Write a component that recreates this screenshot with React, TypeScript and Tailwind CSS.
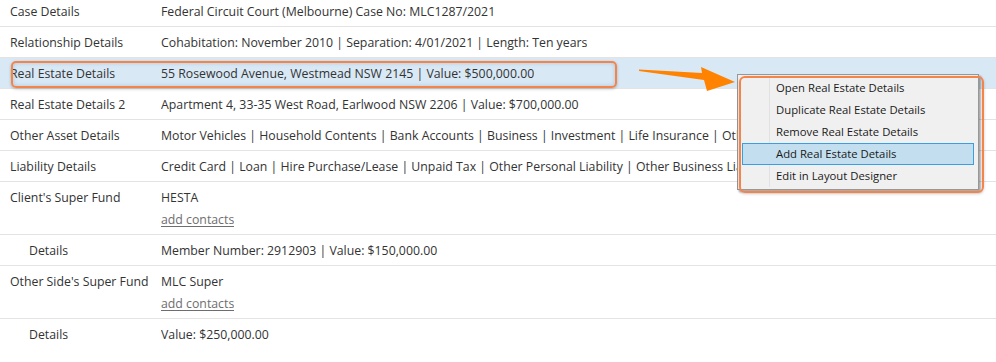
import React from "react";

type Row = {
  label: string;
  value: string;
  link?: boolean;
  indent?: boolean;
  selected?: boolean;
};

const rows: Row[] = [
  { label: "Case Details", value: "Federal Circuit Court (Melbourne) Case No: MLC1287/2021" },
  { label: "Relationship Details", value: "Cohabitation: November 2010 | Separation: 4/01/2021 | Length: Ten years" },
  { label: "Real Estate Details", value: "55 Rosewood Avenue, Westmead NSW 2145 | Value: $500,000.00", selected: true },
  { label: "Real Estate Details 2", value: "Apartment 4, 33-35 West Road, Earlwood NSW 2206 | Value: $700,000.00" },
  {
    label: "Other Asset Details",
    value: "Motor Vehicles | Household Contents | Bank Accounts | Business | Investment | Life Insurance | Other",
  },
  {
    label: "Liability Details",
    value:
      "Credit Card | Loan | Hire Purchase/Lease | Unpaid Tax | Other Personal Liability | Other Business Liability",
  },
  { label: "Client's Super Fund", value: "HESTA", link: true },
  { label: "Details", value: "Member Number: 2912903 | Value: $150,000.00", indent: true },
  { label: "Other Side's Super Fund", value: "MLC Super", link: true },
  { label: "Details", value: "Value: $250,000.00", indent: true },
];

const menuItems = [
  "Open Real Estate Details",
  "Duplicate Real Estate Details",
  "Remove Real Estate Details",
  "Add Real Estate Details",
  "Edit in Layout Designer",
];

const DetailRow = ({ row, first, last }: { row: Row; first: boolean; last: boolean }) => (
  <div
    className={`flex pb-[3px] ${last ? "" : "border-b border-[#e3e3e3]"} ${first ? "pt-[1px]" : "pt-[5px]"} ${
      row.selected ? "bg-[#d9e8f5]" : ""
    }`}
  >
    <div className={`w-[161px] shrink-0 whitespace-nowrap ${row.indent ? "pl-[29px]" : "pl-[10px]"}`}>
      {row.label}
    </div>
    <div className="flex flex-col whitespace-nowrap overflow-hidden">
      <span>{row.value}</span>
      {row.link && <span className="text-[#6e6e6e] underline underline-offset-2">add contacts</span>}
    </div>
  </div>
);

export default function App() {
  return (
    <div
      className="relative w-[996px] h-[362px] overflow-hidden bg-white text-[#333333] text-[12.3px] leading-[22px]"
      style={{ fontFamily: '"Open Sans", "Noto Sans", sans-serif' }}
    >
      {rows.map((row, i) => (
        <DetailRow key={i} row={row} first={i === 0} last={i === rows.length - 1} />
      ))}

      {/* orange highlight over selected row */}
      <div className="absolute left-[11px] top-[61px] w-[606px] h-[27px] rounded-[5px] border-2 border-[#f5844a] shadow-[inset_0_0_4px_rgba(90,130,170,0.35),0_1px_3px_rgba(0,0,0,0.25)]" />

      {/* arrow */}
      <svg className="absolute left-[636px] top-[62px]" width="102" height="32" viewBox="0 0 102 32">
        <polygon points="3,7.5 66,11 65,5 99,20 71,29 68,18 3,9" fill="#ff8200" />
      </svg>

      {/* context menu */}
      <div className="absolute left-[737px] top-[74px] w-[242px] h-[116px] bg-[#f0f0f0] border border-[#979797] shadow-[2px_2px_2px_rgba(0,0,0,0.35)] py-[2px] text-[11.3px]">
        <div className="absolute left-[31px] top-[2px] bottom-[2px] w-px bg-[#e2e2e2]" />
        {menuItems.map((item) => (
          <div
            key={item}
            className={`relative mx-[4px] h-[22px] flex items-center text-[#1a1a1a] whitespace-nowrap ${
              item === "Add Real Estate Details" ? "bg-[#c3dfef] border border-[#3a9ee2] pl-[33px]" : "pl-[34px]"
            }`}
          >
            {item}
          </div>
        ))}
      </div>
      <div className="absolute left-[739px] top-[76px] w-[245px] h-[117px] rounded-[6px] border-2 border-[#f5844a] shadow-[0_1px_3px_rgba(0,0,0,0.2)]" />
    </div>
  );
}
